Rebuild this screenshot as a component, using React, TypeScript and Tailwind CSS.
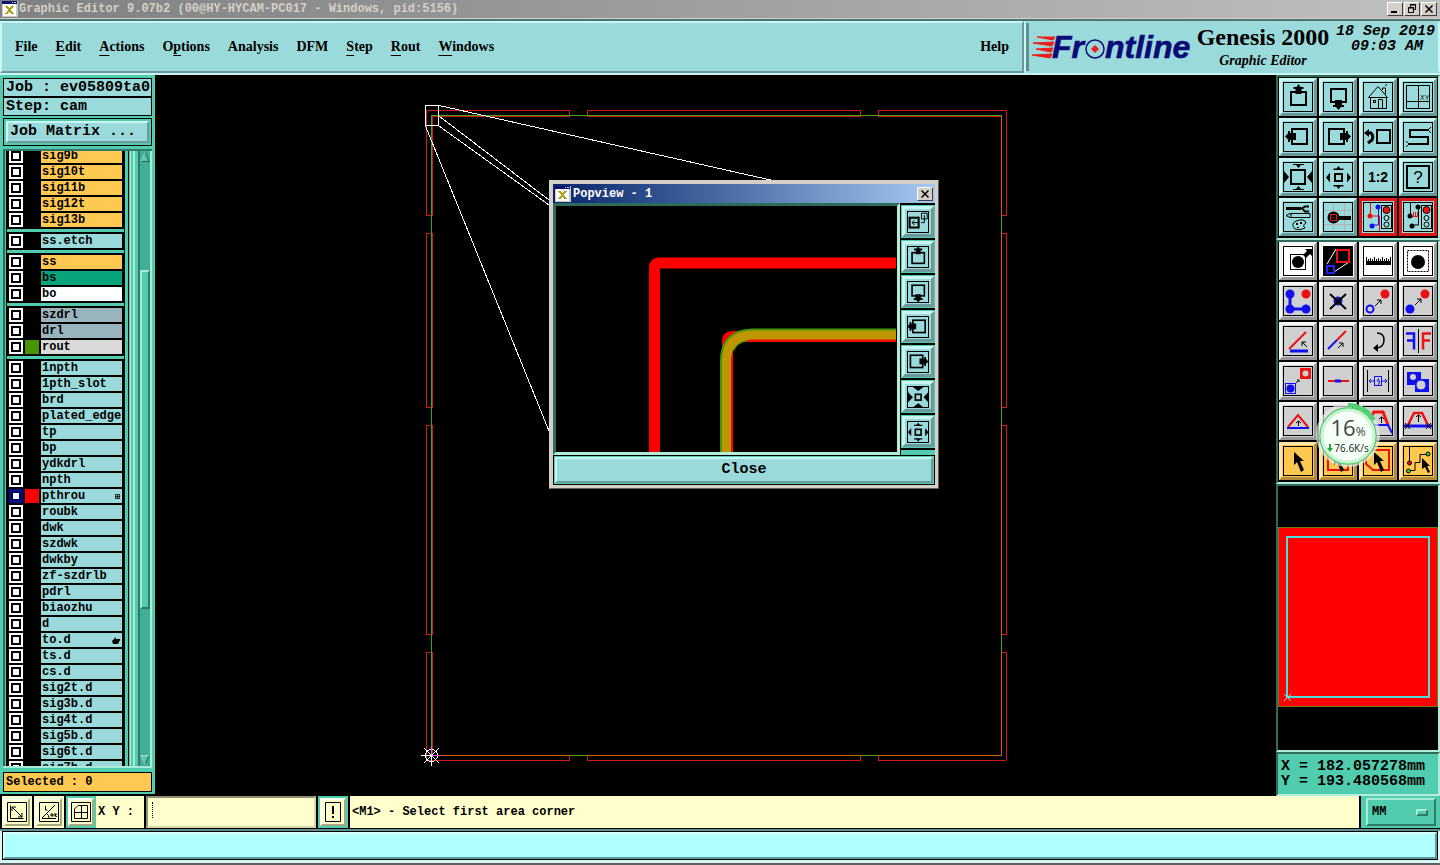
import { useState } from 'react'
import type { ReactNode } from 'react'

const mono = "font-['Liberation_Mono',monospace] font-bold"
const serif = "font-['Liberation_Serif',serif] font-bold"

// raised borders
const raisedCyan = 'border-t-[#c9f5f2] border-l-[#c9f5f2] border-r-[#6a9a9c] border-b-[#6a9a9c]'
const raisedGray = 'border-t-[#f4f4f4] border-l-[#f4f4f4] border-r-[#989898] border-b-[#989898]'
const raisedOrange = 'border-t-[#ffe6a8] border-l-[#ffe6a8] border-r-[#b48a40] border-b-[#b48a40]'
const raisedYellow = 'border-t-[#fffff0] border-l-[#fffff0] border-r-[#a8a880] border-b-[#a8a880]'
const raisedGreen = 'border-t-[#a8ecd8] border-l-[#a8ecd8] border-r-[#2f7a68] border-b-[#2f7a68]'
const raisedWin = 'border-t-white border-l-white border-r-[#404040] border-b-[#404040]'

const tones = {
  cyan: `bg-[#9bdada] ${raisedCyan}`,
  white: `bg-white ${raisedGray}`,
  gray: `bg-[#d0d0d0] ${raisedGray}`,
  orange: `bg-[#ffc850] ${raisedOrange}`,
  red: 'bg-[#9bdada] border-[#dc1818]',
}

type Tone = keyof typeof tones
type Tool = { label: string; tone: Tone; icon: ReactNode }
type Layer = { name: string; bg?: string; swatch?: string; active?: boolean; mark?: 'grid' | 'hand' }

const orange = 'bg-[#ffc850]'
const steel = 'bg-[#9ab4bd]'

const layerGroups: Layer[][] = [
  ['sig9b', 'sig10t', 'sig11b', 'sig12t', 'sig13b'].map((name) => ({ name, bg: orange })),
  [{ name: 'ss.etch' }],
  [{ name: 'ss', bg: orange }, { name: 'bs', bg: 'bg-[#08a47c]' }, { name: 'bo', bg: 'bg-white' }],
  [
    { name: 'szdrl', bg: steel },
    { name: 'drl', bg: steel },
    { name: 'rout', bg: 'bg-[#dadada]', swatch: 'bg-[#459600]' },
  ],
  [
    { name: '1npth' }, { name: '1pth_slot' }, { name: 'brd' }, { name: 'plated_edge' },
    { name: 'tp' }, { name: 'bp' }, { name: 'ydkdrl' }, { name: 'npth' },
    { name: 'pthrou', swatch: 'bg-[#ff0000]', active: true, mark: 'grid' },
    { name: 'roubk' }, { name: 'dwk' }, { name: 'szdwk' }, { name: 'dwkby' },
    { name: 'zf-szdrlb' }, { name: 'pdrl' }, { name: 'biaozhu' }, { name: 'd' },
    { name: 'to.d', mark: 'hand' }, { name: 'ts.d' }, { name: 'cs.d' },
    { name: 'sig2t.d' }, { name: 'sig3b.d' }, { name: 'sig4t.d' }, { name: 'sig5b.d' },
    { name: 'sig6t.d' }, { name: 'sig7b.d' },
  ],
]

const BLUE = '#1010f0'
const RED = '#ee1111'

const upIcon = (
  <>
    <rect x="8" y="10" width="15" height="13" fill="none" stroke="#000" strokeWidth="2" />
    <path d="M15.500 2l2 3h3v2h-2v5h-6V7h-2V5h3z" />
  </>
)
const downIcon = (
  <>
    <rect x="8" y="7" width="15" height="13" fill="none" stroke="#000" strokeWidth="2" />
    <path d="M12 18h7v5h2v2h-3l-2.500 3-2.500-3h-3v-2h2z" />
  </>
)
const leftIcon = (
  <>
    <rect x="9" y="7" width="15" height="15" fill="none" stroke="#000" strokeWidth="2" />
    <path d="M2 14.500l3-3V9h2v2h6v7H7v2H5v-2.500z" />
  </>
)
const rightIcon = (
  <>
    <rect x="6" y="7" width="15" height="15" fill="none" stroke="#000" strokeWidth="2" />
    <path d="M28 14.500l-3-3V9h-2v2h-6v7h6v2h2v-2.500z" />
  </>
)
const inwardArrows = <path d="M10 2h11v1h-3l-2.500 3L13 3h-3zM10 28h11v-1h-3l-2.500-3L13 27h-3zM1 9l5 6-5 6zM29 9l-5 6 5 6z" />
const zoomInIcon = (
  <>
    <rect x="8" y="8" width="14" height="14" fill="none" stroke="#000" strokeWidth="2" />
    {inwardArrows}
  </>
)
const zoomOutIcon = (
  <>
    <rect x="12" y="12" width="7" height="7" fill="none" stroke="#000" strokeWidth="2" />
    <path d="M15.500 4l2 2.500h3V8h-10V6.500h3zM15.500 27l2-2.500h3V23h-10v1.500h3zM3 15.500l4-5v10zM28 15.500l-4-5v10z" />
  </>
)
const light = (
  <>
    <rect x="18.500" y="3.500" width="10" height="23" fill="#9bdada" stroke="#000" />
    <circle cx="23.500" cy="8" r="3.500" fill={RED} stroke="#000" />
    <circle cx="23.500" cy="16" r="2.500" fill="none" stroke="#000" />
    <circle cx="23.500" cy="22.500" r="2.500" fill="none" stroke="#000" />
  </>
)
const arrow = <path d="M11 6v13l3-3 4 10 3-2-4-9h4z" />

const viewTools: Tool[] = [
  { label: 'Pan up', tone: 'cyan', icon: upIcon },
  { label: 'Pan down', tone: 'cyan', icon: downIcon },
  {
    label: 'Home view',
    tone: 'cyan',
    icon: (
      <g fill="none" stroke="#000">
        <path d="M5.500 15.500L15 4.500l9.500 11zM7.500 15.500v11h16v-11M15.500 26.500v-9h4v9M19.500 8V6h3v6M22 4l2-2" />
        <rect x="10.500" y="18.500" width="2" height="2" />
      </g>
    ),
  },
  {
    label: 'XY window',
    tone: 'cyan',
    icon: (
      <>
        <path d="M3.500 3.500h23v23h-23zM15.500 4v22M4 19.500h22" fill="none" stroke="#000" />
        <text x="17" y="18" fontSize="7" fontFamily="Liberation Sans" fontWeight="normal">XY</text>
      </>
    ),
  },
  { label: 'Pan left', tone: 'cyan', icon: leftIcon },
  { label: 'Pan right', tone: 'cyan', icon: rightIcon },
  {
    label: 'Previous view',
    tone: 'cyan',
    icon: (
      <>
        <rect x="14" y="8" width="13" height="13" fill="none" stroke="#000" strokeWidth="2" />
        <path d="M5 11h3q3 3 1 7l-4 3" fill="none" stroke="#000" strokeWidth="3" />
        <path d="M1 11l5-4v8z" />
      </>
    ),
  },
  {
    label: 'Snake view',
    tone: 'cyan',
    icon: (
      <>
        <path d="M25 8H7v7h18v7H6" fill="none" stroke="#000" strokeWidth="2" />
        <path d="M25 8l3-3M25 8l3 3M6 22l-3-3M6 22l-3 3" stroke="#000" />
      </>
    ),
  },
  { label: 'Zoom in', tone: 'cyan', icon: zoomInIcon },
  { label: 'Zoom out', tone: 'cyan', icon: zoomOutIcon },
  {
    label: 'Zoom ratio',
    tone: 'cyan',
    icon: <text x="15" y="20" fontSize="14" fontWeight="bold" textAnchor="middle" fontFamily="Liberation Sans">1:2</text>,
  },
  {
    label: 'Query',
    tone: 'cyan',
    icon: (
      <>
        <rect x="4" y="4" width="22" height="22" fill="none" stroke="#000" strokeWidth="2" />
        <text x="15" y="21" fontSize="17" fontWeight="normal" textAnchor="middle" fontFamily="Liberation Sans">?</text>
      </>
    ),
  },
  {
    label: 'Setup',
    tone: 'cyan',
    icon: (
      <>
        <path d="M3 5h15v3H3z" />
        <path d="M26 4.500h-4l-3 2 3 3h4" fill="none" stroke="#000" strokeWidth="2" />
        <path d="M3 13.500l4-2h20v4H7zM8 11.500v4M12 27q-5-5 1-8 9-3 10 2-4 2-1 5-5 3-10 1z" fill="none" stroke="#000" />
        <path d="M13 21h2v2h-2zM17 20h2v2h-2zM14 25h2v1h-2z" />
      </>
    ),
  },
  {
    label: 'Snap',
    tone: 'cyan',
    icon: (
      <>
        <path d="M10.500 1v28M21.500 1v28M1 8.500h28M1 22.500h28" stroke="#b8b0b0" />
        <circle cx="10.500" cy="15.500" r="6" />
        <path d="M15 14h13v4H15z" />
        <rect x="7.500" y="12.500" width="6" height="6" stroke={RED} />
        <path d="M10 15h1v1h-1z" fill={RED} />
      </>
    ),
  },
  {
    label: 'Net check',
    tone: 'red',
    icon: (
      <>
        <path d="M7.500 1v13h9v15" fill="none" stroke={RED} />
        <path d="M15.500 5v18H9" fill="none" stroke={BLUE} />
        <circle cx="7" cy="14" r="2.500" fill={RED} />
        <circle cx="15" cy="5" r="2.500" fill={BLUE} />
        <circle cx="9" cy="24" r="2.500" fill={BLUE} />
        {light}
      </>
    ),
  },
  {
    label: 'Spacing check',
    tone: 'red',
    icon: (
      <>
        <path d="M7.500 1v13M15.500 5v18H9M7.500 14.500h2" fill="none" stroke="#000" />
        <path d="M10.500 10v4M12.500 10v4M14.500 10v4M9 14.500h6" stroke={RED} />
        <circle cx="7" cy="14" r="2.500" />
        <circle cx="15" cy="5" r="2.500" />
        <circle cx="9" cy="24" r="2.500" />
        {light}
      </>
    ),
  },
]

const editTools: Tool[] = [
  {
    label: 'Select feature',
    tone: 'white',
    icon: (
      <>
        <rect x="7.500" y="8.500" width="15" height="15" fill="none" stroke="#000" />
        <circle cx="15" cy="16" r="6" />
        <path d="M20 9l4-4-2-2h7v7l-2-2-4 4z" />
      </>
    ),
  },
  {
    label: 'Popview',
    tone: 'white',
    icon: (
      <>
        <rect width="30" height="30" />
        <path d="M4 18l9-15M11 26l15-10" stroke="#fff" />
        <rect x="14" y="4" width="12" height="12" fill="none" stroke={RED} strokeWidth="2" />
        <rect x="4" y="20" width="7" height="7" fill="none" stroke="#2222ff" strokeWidth="2" />
      </>
    ),
  },
  {
    label: 'Measure',
    tone: 'white',
    icon: (
      <>
        <path d="M3 15h25v4H3z" />
        <path d="M3.500 11v4M5.500 13v2M7.500 12v3M9.500 13v2M11.500 11v4M13.500 13v2M15.500 12v3M17.500 13v2M19.500 11v4M21.500 13v2M23.500 12v3M25.500 13v2M27.500 11v4" stroke="#000" />
      </>
    ),
  },
  {
    label: 'Area select',
    tone: 'white',
    icon: (
      <>
        <rect x="4.500" y="4.500" width="21" height="21" fill="none" stroke="#000" strokeDasharray="2 1" />
        <circle cx="15" cy="16" r="7" />
      </>
    ),
  },
  {
    label: 'Net points',
    tone: 'gray',
    icon: (
      <>
        <path d="M7 8v15h16" fill="none" stroke={BLUE} strokeWidth="3" />
        <circle cx="7" cy="8" r="4.500" fill={BLUE} />
        <circle cx="7" cy="23" r="4.500" fill={BLUE} />
        <circle cx="23" cy="23" r="4.500" fill={BLUE} />
        <circle cx="23" cy="8" r="4.500" fill={RED} />
      </>
    ),
  },
  {
    label: 'Delete',
    tone: 'gray',
    icon: (
      <>
        <circle cx="15" cy="15" r="4.500" fill="#1818b0" />
        <path d="M7 8l16 15M23 8L7 23" stroke="#000" strokeWidth="2" />
      </>
    ),
  },
  {
    label: 'Move',
    tone: 'gray',
    icon: (
      <>
        <circle cx="7" cy="23" r="3.500" fill="none" stroke={BLUE} strokeWidth="2" />
        <circle cx="22" cy="8" r="4.500" fill={RED} />
        <path d="M12 20l6-6M14 14h4v4" fill="none" stroke="#000" />
      </>
    ),
  },
  {
    label: 'Copy',
    tone: 'gray',
    icon: (
      <>
        <circle cx="7" cy="23" r="4.500" fill={BLUE} />
        <circle cx="22" cy="8" r="4.500" fill={RED} />
        <path d="M12 19l6-6M14 13h4v4" fill="none" stroke="#000" />
      </>
    ),
  },
  {
    label: 'Angle',
    tone: 'gray',
    icon: (
      <>
        <path d="M7 25h18" stroke={BLUE} strokeWidth="3" />
        <path d="M6 23L23 6" stroke={RED} strokeWidth="2" />
        <path d="M24 21l-5-5M19 20v-4h4" fill="none" stroke="#000" />
      </>
    ),
  },
  {
    label: 'Extend line',
    tone: 'gray',
    icon: (
      <>
        <path d="M5 23l9-9" stroke={BLUE} strokeWidth="2" />
        <path d="M14 14l9-9" stroke={RED} strokeWidth="2" />
        <path d="M15 22l5-5M16 17h4v4" fill="none" stroke="#000" />
      </>
    ),
  },
  {
    label: 'Rotate',
    tone: 'gray',
    icon: (
      <>
        <path d="M14 7q7 0 7 7t-7 8" fill="none" stroke="#000" strokeWidth="1.500" />
        <path d="M15 18l-5 4 5 4z" />
      </>
    ),
  },
  {
    label: 'Mirror',
    tone: 'gray',
    icon: (
      <>
        <path d="M15.500 3v24" stroke="#000" />
        <path d="M3 7.500h8v16M4 14.500h7" fill="none" stroke={BLUE} strokeWidth="2.500" />
        <path d="M28 7.500h-8v16M27 14.500h-7" fill="none" stroke={RED} strokeWidth="2.500" />
      </>
    ),
  },
  {
    label: 'Copy to layer',
    tone: 'gray',
    icon: (
      <>
        <rect x="2.500" y="17.500" width="10" height="10" fill="none" stroke={BLUE} />
        <circle cx="7.500" cy="22.500" r="4" fill={BLUE} />
        <path d="M17 2h11v11H17z" fill={RED} />
        <circle cx="22.500" cy="7.500" r="3" fill="#d0d0d0" />
        <path d="M13 17l3-3M14 14h2v2" fill="none" stroke="#000" />
      </>
    ),
  },
  {
    label: 'Break line',
    tone: 'gray',
    icon: (
      <>
        <path d="M5 15h21" stroke={RED} strokeWidth="2" />
        <path d="M12 15h6" stroke={BLUE} strokeWidth="3" />
      </>
    ),
  },
  {
    label: 'Spacing',
    tone: 'gray',
    icon: (
      <>
        <path d="M4.500 4v22M25.500 4v22" stroke="#000" />
        <path d="M6 15h5M19 15h5M8 13l-2 2 2 2M22 13l2 2-2 2M16 12l-2 3h3l-2 4" fill="none" stroke={BLUE} />
        <rect x="11.500" y="10.500" width="7" height="9" fill="none" stroke={BLUE} />
      </>
    ),
  },
  {
    label: 'Merge shapes',
    tone: 'gray',
    icon: (
      <>
        <path d="M4 6h14v7h8v13H12v-7H4z" fill={BLUE} />
        <circle cx="10" cy="11" r="3" fill="#d0d0d0" />
        <circle cx="18" cy="19" r="5" fill="#d0d0d0" stroke={BLUE} />
      </>
    ),
  },
  {
    label: 'Triangle',
    tone: 'gray',
    icon: (
      <>
        <path d="M5 21L15 9l10 12" fill="none" stroke={RED} strokeWidth="2" />
        <path d="M4 22h22" stroke={BLUE} strokeWidth="2" />
        <path d="M15.500 20v-5M13 17l2.500-2 2.500 2" fill="none" stroke="#000" />
      </>
    ),
  },
  {
    label: 'Stretch corner',
    tone: 'gray',
    icon: (
      <>
        <path d="M4 22L14 5l3 4" fill="none" stroke={RED} strokeWidth="2" />
        <path d="M4 23L15 9l12 16" fill="none" stroke={BLUE} strokeWidth="2" />
      </>
    ),
  },
  {
    label: 'Trapezoid',
    tone: 'gray',
    icon: (
      <>
        <path d="M3 19L11 6h9l5 13" fill="none" stroke={RED} strokeWidth="3" />
        <path d="M3 19h22l4 8" fill="none" stroke={BLUE} strokeWidth="2" />
        <path d="M18.500 17v-6M16 13l2.500-2 2.500 2" fill="none" stroke="#000" />
      </>
    ),
  },
  {
    label: 'Trapezoid cut',
    tone: 'gray',
    icon: (
      <>
        <path d="M1 20h28" stroke={BLUE} strokeWidth="3" />
        <path d="M5 19l6-12h8l6 12" fill="none" stroke={RED} strokeWidth="2.500" />
        <path d="M15.500 16V9M13 11l2.500-2 2.500 2M2 17l5 6M7 17l-5 6M23 17l5 6M28 17l-5 6" fill="none" stroke="#000" />
      </>
    ),
  },
  { label: 'Pointer', tone: 'orange', icon: arrow },
  {
    label: 'Pointer rectangle',
    tone: 'orange',
    icon: (
      <>
        <rect x="5" y="6" width="20" height="18" fill="none" stroke={RED} strokeWidth="2" />
        {arrow}
      </>
    ),
  },
  {
    label: 'Pointer polygon',
    tone: 'orange',
    icon: (
      <>
        <path d="M8 4h18v20H10l-7-6V9z" fill="none" stroke={RED} strokeWidth="2" />
        {arrow}
      </>
    ),
  },
  {
    label: 'Pointer net',
    tone: 'orange',
    icon: (
      <>
        <path d="M6.500 1v16M6 24.500h6v-8h5v-8h9" fill="none" stroke="#000" />
        <circle cx="6.500" cy="17" r="2" fill={RED} stroke="#000" />
        <circle cx="5.500" cy="25" r="2" fill="#30e030" stroke="#000" />
        <circle cx="25" cy="8" r="2" fill="#30e030" stroke="#000" />
        <path d="M19 12v11l3-2 3 6 2-1-3-6h3z" />
      </>
    ),
  },
]

const popTools = [
  {
    label: 'Popview area',
    icon: (
      <>
        <rect x="5" y="10" width="11" height="12" fill="none" stroke="#000" strokeWidth="2.500" />
        <path d="M19.500 4.500h7v7h-7zM23 7v9h-4M16 16H8M11 13l-3 3 3 3" fill="none" stroke="#000" strokeWidth="1.200" />
      </>
    ),
  },
  { label: 'Popview up', icon: upIcon },
  { label: 'Popview down', icon: downIcon },
  { label: 'Popview left', icon: leftIcon },
  { label: 'Popview right', icon: rightIcon },
  {
    label: 'Popview zoom in',
    icon: (
      <>
        <rect x="12" y="12" width="7" height="7" fill="none" stroke="#000" strokeWidth="2" />
        <path d="M9 3h13l-6.500 5zM9 28h13l-6.500-5zM3 9l6 6.500L3 22zM28 9l-6 6.500 6 6.500z" />
      </>
    ),
  },
  { label: 'Popview zoom out', icon: zoomOutIcon },
]

const menus = [
  ['', 'F', 'ile'], ['', 'E', 'dit'], ['', 'A', 'ctions'], ['O', 'p', 'tions'], ['Analysis', '', ''],
  ['DFM', '', ''], ['', 'S', 'tep'], ['', 'R', 'out'], ['', 'W', 'indows'],
]

function ToolButton({ tool }: { tool: Tool }) {
  return (
    <button type="button" aria-label={tool.label} className={`h-[38px] w-[38px] border-[3px] p-px ${tones[tool.tone]}`}>
      <svg viewBox="0 0 30 30" className="h-[30px] w-[30px]">
        <rect x="0.500" y="0.500" width="29" height="29" fill="none" stroke="#000" />
        {tool.icon}
      </svg>
    </button>
  )
}

function AppIcon() {
  return (
    <svg viewBox="0 0 16 16" className="h-4 w-4 shrink-0" shapeRendering="crispEdges">
      <rect width="16" height="16" fill="#c8c8c8" />
      <rect x="1" y="3" width="13" height="12" fill="#fff" />
      <rect width="15" height="3" fill="#101070" />
      <path d="M10 1h1v1h-1zM12 1h2v1h-2z" fill="#ccc" />
      <path d="M4 5l7 8M11 5l-7 8" stroke="#b0a020" strokeWidth="2" />
    </svg>
  )
}

function WinButton({ label, children, onClick }: { label: string; children: ReactNode; onClick?: () => void }) {
  return (
    <button type="button" aria-label={label} onClick={onClick} className={`h-[14px] w-4 border bg-[#d4d0c8] ${raisedWin}`}>
      <svg viewBox="0 0 14 12" className="h-3 w-[14px]" fill="none" stroke="#000">
        {children}
      </svg>
    </button>
  )
}

function FrontlineLogo() {
  return (
    <svg viewBox="0 0 164 34" className="h-[34px] w-[164px] shrink-0" role="img" aria-label="Frontline">
      <path d="M6 7h18l-2 3zM2 13l21-1-2 4zM5 19l17-1-2 4zM1 25l20-1-2 4z" fill="#ee1c1c" stroke="#ee1c1c" />
      <g fill="#0a0a78" stroke="#0a0a78" strokeWidth="0.600" fontFamily="Liberation Sans" fontStyle="italic" fontWeight="bold" fontSize="32">
        <text x="21" y="28">Fr</text>
        <text x="74" y="28">ntline</text>
      </g>
      <circle cx="64" cy="19" r="9" fill="#9bdada" stroke="#0a0a78" strokeWidth="1.500" />
      <path d="M64 15l4 4-4 4-4-4z" fill="#ee1c1c" />
    </svg>
  )
}

function LayerRow({ layer }: { layer: Layer }) {
  const ring = layer.active
    ? 'border-[#0a0a90] shadow-[inset_0_0_0_2px_#000060]'
    : 'border-white shadow-[inset_0_0_0_2px_#000]'
  return (
    <label className="flex h-4 shrink-0 items-center gap-0.5 px-0.5">
      <input type="checkbox" className={`h-[14px] w-[14px] shrink-0 appearance-none border-2 bg-white ${ring}`} />
      <span className={`h-[14px] w-[14px] shrink-0 ${layer.swatch ?? 'bg-black'}`} />
      <span className={`flex h-[14px] flex-1 items-center justify-between overflow-hidden pl-px pr-0.5 text-xs leading-[14px] ${layer.bg ?? 'bg-[#9bdada]'}`}>
        {layer.name}
        {layer.mark === 'grid' && (
          <svg viewBox="0 0 5 5" className="h-[5px] w-[5px]" fill="none" stroke="#000" strokeWidth="0.800">
            <path d="M.5.5h4v4h-4zM2.500.5v4M.5 2.500h4" />
          </svg>
        )}
        {layer.mark === 'hand' && (
          <svg viewBox="0 0 8 7" className="h-[7px] w-2">
            <path d="M0 4l4-4v2h4v2H7v2L5 7H1z" />
          </svg>
        )}
      </span>
    </label>
  )
}

function Sidebar() {
  return (
    <aside className="flex w-[155px] shrink-0 flex-col border-b-2 border-black bg-[#52ccae] px-[3px] pb-0.5 pt-[3px]">
      <div className="border border-black bg-[#9bdada] pl-0.5 text-[15px] leading-[17px]">Job : ev05809ta0</div>
      <div className="border border-black bg-[#9bdada] pl-0.5 text-[15px] leading-[17px]">Step: cam</div>
      <div className="mt-0.5 border border-black p-0.5">
        <button type="button" className={`block w-full border-2 bg-[#9bdada] pl-0.5 text-left text-[15px] leading-[18px] ${raisedCyan}`}>
          Job Matrix ...
        </button>
      </div>
      <div className="mt-[3px] flex min-h-0 flex-1 border-b-2 border-t-2 border-b-[#a8ecd8] border-t-[#2f7a68]">
        <div className="w-0.5 bg-[#2f6b5c]" />
        <div className="ml-px flex w-[119px] flex-col overflow-hidden border-x border-black">
          <div className="-mt-1 flex flex-col gap-[3px]">
            {layerGroups.map((group) => (
              <div key={group[0].name} className="flex flex-col bg-black py-px">
                {group.map((layer) => <LayerRow key={layer.name} layer={layer} />)}
              </div>
            ))}
          </div>
        </div>
        <div className="ml-[3px] w-[3px] border-x border-[#a8ecd8] border-l-black" />
        <div className="ml-0.5 w-0.5 bg-[#a8ecd8]" />
        <div className="ml-[3px] flex flex-1 flex-col border-l-2 border-r-2 border-l-[#2f7a68] border-r-[#a8ecd8] bg-[#41ae96]">
          <svg viewBox="0 0 11 12" className="h-3 w-full">
            <path d="M1 11l4.500-10L10 11z" fill="#52ccae" stroke="#1f5c4e" />
            <path d="M1 11l4.500-10" stroke="#c0f4e6" />
          </svg>
          <div className="flex flex-[108]" />
          <div className={`flex-[339] border-2 bg-[#52ccae] ${raisedGreen}`} />
          <div className="flex flex-[147]" />
          <svg viewBox="0 0 11 12" className="h-3 w-full">
            <path d="M1 1l4.500 10L10 1z" fill="#52ccae" stroke="#1f5c4e" />
            <path d="M1 1l4.500 10M1 1h9" stroke="#c0f4e6" />
          </svg>
        </div>
      </div>
      <div className="mt-1 border border-black bg-[#ffc850] pl-0.5 text-xs leading-[18px]">Selected : 0</div>
    </aside>
  )
}

function Board() {
  const xs = [[426, 570], [587, 861], [878, 1006]]
  const ys = [[110, 216], [233, 408], [425, 635], [652, 760]]
  return (
    <svg viewBox="155 75 1121 721" preserveAspectRatio="xMinYMin meet" className="h-full w-full" fill="none" shapeRendering="crispEdges">
      <g stroke="#d01818">
        {xs.map(([a, b], i) => (
          <g key={a}>
            <path d={`M${a} 110.500H${b}M${i ? a : 432} 116.500H${i === 2 ? 1001 : b}M${a} 760.500H${b}`} />
            {i > 0 && <path d={`M${a + 0.5} 110v6M${a + 0.5} 755v6`} />}
            {i < 2 && <path d={`M${b - 0.5} 110v6M${b - 0.5} 755v6`} />}
          </g>
        ))}
        {ys.map(([a, b], i) => (
          <g key={a}>
            <path d={`M426.500 ${a}V${b}M432.500 ${i ? a : 116}V${i === 3 ? 755 : b}M1006.500 ${a}V${b}`} />
            {i > 0 && <path d={`M426 ${a + 0.5}h6M1001 ${a + 0.5}h6`} />}
            {i < 3 && <path d={`M426 ${b - 0.5}h6M1001 ${b - 0.5}h6`} />}
          </g>
        ))}
      </g>
      <path d="M431.500 115.500H1001.500V755.500H431.500z" stroke="#46a01e" />
      <g stroke="#d46400">
        {xs.map(([a, b], i) => <path key={a} d={`M${i ? a : 432} 755.500H${i === 2 ? 1001 : b}`} />)}
        {ys.map(([a, b], i) => <path key={a} d={`M1001.500 ${i ? a : 116}V${i === 3 ? 755 : b}`} />)}
      </g>
      <g stroke="#fff">
        <rect x="425.500" y="105.500" width="13" height="20" />
        <path d="M439 105.500L775 181M439 116L549 200M439 126L549 205M425.500 126L549 431" />
        <circle cx="431.500" cy="755.500" r="6" />
        <path d="M421 755.500h20M431.500 746v20M424 748l15 15M439 748l-15 15" />
      </g>
      <path d="M432 755.500h9M431.500 746v9" stroke="#e060e0" />
    </svg>
  )
}

function Popview({ onClose }: { onClose: () => void }) {
  return (
    <section className="absolute left-[394px] top-[105px] flex w-[390px] flex-col border border-b-[#606060] border-l-[#d4d0c8] border-r-[#606060] border-t-[#d4d0c8] bg-[#d4d0c8] p-[3px]">
      <header className="flex h-[19px] items-center gap-0.5 bg-gradient-to-r from-[#0a246a] to-[#a6caf0] px-0.5 text-xs text-white">
        <AppIcon />
        <h2 className="flex-1">Popview - 1</h2>
        <WinButton label="Close popview" onClick={onClose}>
          <path d="M3.500 2.500l7 7M10.500 2.500l-7 7" strokeWidth="1.500" />
        </WinButton>
      </header>
      <div className="flex bg-black">
        <div className="flex-1 border-[3px] border-b-[#b4ecdc] border-l-[#2f6b5c] border-r-[#b4ecdc] border-t-[#2f6b5c]">
          <svg viewBox="556 206 341 246" className="block w-full" fill="none">
            <path d="M654.500 453V268q0-5 5-5H896" stroke="#f00" strokeWidth="11" />
            <path d="M727.500 453V341.500q0-5 5-5H896" stroke="#f00" strokeWidth="11" />
            <path d="M725 453V361q0-27 27-27.500H896" stroke="#46960a" strokeWidth="10" />
            <path d="M734 352q2-9 14-11l-6-5-10 8z" fill="#46960a" />
            <path d="M726.500 453V361q0-25 25-26H896" stroke="#be9600" strokeWidth="9" />
          </svg>
        </div>
        <div className="flex w-[35px] flex-col gap-0.5 pl-px pt-0.5">
          {popTools.map((t) => (
            <div key={t.label} className="bg-[#52ccae] p-px">
              <button type="button" aria-label={t.label} className={`flex h-[31px] w-full items-center justify-center border-[3px] bg-[#9bdada] ${raisedCyan}`}>
                <svg viewBox="0 0 22 22" className="h-[22px] w-[22px]">
                  <rect x="0.500" y="0.500" width="21" height="21" fill="none" stroke="#000" />
                  <g transform="translate(-1.500 -1.500) scale(0.820)">{t.icon}</g>
                </svg>
              </button>
            </div>
          ))}
          <div className="flex-1 bg-[#52ccae]" />
        </div>
      </div>
      <div className="border border-black bg-[#52ccae] p-px">
        <button type="button" onClick={onClose} className={`block w-full border-2 bg-[#9bdada] text-[15px] leading-[22px] ${raisedCyan}`}>
          Close
        </button>
      </div>
    </section>
  )
}

function ToolPanel() {
  const frame = 'grid grid-cols-4 gap-0.5 border-2 border-b-[#b4ecdc] border-l-[#2f6b5c] border-r-[#b4ecdc] border-t-[#2f6b5c] bg-black px-px'
  return (
    <aside className="relative flex w-[164px] shrink-0 flex-col">
      <div className={`${frame} pb-0.5 pt-px`}>
        {viewTools.map((t) => <ToolButton key={t.label} tool={t} />)}
      </div>
      <div className={`${frame} pb-0.5`}>
        {editTools.map((t) => <ToolButton key={t.label} tool={t} />)}
      </div>
      <div className="min-h-0 flex-1 border-2 border-b-[#b4ecdc] border-l-[#2f6b5c] border-r-[#b4ecdc] border-t-[#2f6b5c] bg-black">
        <svg viewBox="1278 486 160 262" preserveAspectRatio="xMinYMin meet" className="h-full w-full" fill="none" shapeRendering="crispEdges">
          <rect x="1278.500" y="527.500" width="159" height="179" fill="#f00" stroke="#7a7a10" />
          <rect x="1287" y="537" width="142" height="160" stroke="#50dcdc" strokeWidth="2" />
          <path d="M1284 694l7 7M1291 694l-7 7" stroke="#a0e0e0" />
        </svg>
      </div>
      <div className="border-2 border-b-[#b4ecdc] border-l-[#2f6b5c] border-r-[#b4ecdc] border-t-[#2f6b5c] bg-[#52ccae] py-[5px] pl-[3px] text-[15px] leading-[15px]">
        <p>X = 182.057278mm</p>
        <p>Y = 193.480568mm</p>
      </div>
      <SpeedBall />
    </aside>
  )
}

// floating network monitor on top of the tool buttons
function SpeedBall() {
  return (
    <div className="absolute left-10 top-[328px] flex h-16 w-16 flex-col items-center justify-center font-['Open_Sans',sans-serif] font-normal text-[#444]">
      <svg viewBox="0 0 64 64" className="absolute inset-0" fill="none">
        <circle cx="32" cy="32" r="30" stroke="#e8e8e8" strokeOpacity="0.700" strokeWidth="4" />
        <path d="M32 2a30 30 0 0 1 26 15" stroke="#4cd070" strokeWidth="4" />
        <circle cx="32" cy="33" r="28" fill="#f6fff8" stroke="#50cc70" strokeWidth="1.500" />
        <circle cx="32" cy="33" r="26" stroke="#c8f4d2" strokeWidth="3" />
      </svg>
      <div className="relative text-[22px] leading-6">16<span className="text-xs">%</span></div>
      <div className="relative flex items-center text-[10px] leading-4 text-[#222]">
        <svg viewBox="0 0 6 8" className="mr-px h-2 w-1.5">
          <path d="M2 0h2v4h2L3 8 0 4h2z" fill="#20a848" />
        </svg>
        76.6K/s
      </div>
    </div>
  )
}

function StatusButton({ label, green, children }: { label: string; green?: boolean; children: ReactNode }) {
  return (
    <div className={`flex p-0.5 ${green ? 'bg-[#52ccae]' : 'bg-[#ffffcc]'}`}>
      <button type="button" aria-label={label} className={`border-2 bg-[#ffffcc] px-px ${raisedYellow}`}>
        <svg viewBox="0 0 20 20" className="h-5 w-5" fill="none" stroke="#000">
          {children}
        </svg>
      </button>
    </div>
  )
}

function StatusBar() {
  return (
    <div className="flex h-[33px] shrink-0 gap-0.5 border-b border-black bg-black pl-0.5 text-xs">
      <StatusButton label="Distance">
        <path d="M.5.5h19v19H.5zM3.500 3.500v13h13M5 5l10 10M5 9V5h4M15 11v4h-4" />
      </StatusButton>
      <StatusButton label="Angle mode">
        <path d="M.5.5h19v19H.5zM3 16.500h14M3 16L16 3M6.500 4v4h2M10 16q0-3-2-4M12 12h2v2h-2zM16 11v4M18 12l-2 1 2 2" />
      </StatusButton>
      <StatusButton label="Grid" green>
        <path d="M3.500 7L7 3.500h9.500v13h-13zM10.500 3.500v13M3.500 10.500h13M.5.5h19v19H.5z" />
      </StatusButton>
      <label htmlFor="xy" className="-ml-0.5 w-12 bg-[#ffffcc] pl-0.5 leading-8">X Y :</label>
      <div className="flex w-[170px] border-2 border-b-[#d8d8ac] border-l-[#908f70] border-r-[#d8d8ac] border-t-[#908f70] bg-[#ffffcc] py-1 pl-1">
        <span className="h-4 border-l border-dotted border-black" />
        <input id="xy" type="text" className="w-full bg-transparent pl-1 outline-none" />
      </div>
      <StatusButton label="Alert" green>
        <path d="M2.500.5h15v19h-15z" />
        <path d="M10 4v8M10 14v2" strokeWidth="2" />
      </StatusButton>
      <div className="flex-1 bg-[#ffffcc] pl-0.5 leading-8">&lt;M1&gt; - Select first area corner</div>
      <div className="w-[79px] bg-[#52ccae] py-0.5 pl-[5px] pr-1">
        <div className={`flex h-7 items-center border-2 pl-1 pr-1.5 ${raisedGreen}`}>
          <select aria-label="Units" className="min-w-0 flex-1 appearance-none bg-transparent outline-none">
            <option>MM</option>
            <option>INCH</option>
          </select>
          <span className={`h-[7px] w-3 border-2 ${raisedGreen}`} />
        </div>
      </div>
    </div>
  )
}

export default function App() {
  const [popview, setPopview] = useState(true)

  return (
    <div className={`flex h-screen flex-col overflow-hidden bg-black text-black ${mono}`}>
      <header className="flex h-[19px] shrink-0 items-center gap-px border-b border-[#d4d0c8] bg-gradient-to-r from-[#808080] to-[#c0c0c0] pl-0.5 pr-[3px] text-xs text-[#d4d0c8]">
        <AppIcon />
        <h1 className="flex-1 whitespace-nowrap">Graphic Editor 9.07b2 (00@HY-HYCAM-PC017 - Windows, pid:5156)</h1>
        <WinButton label="Minimize"><path d="M3 9h6" strokeWidth="2" /></WinButton>
        <WinButton label="Restore"><path d="M5.500 4V1.500h5v5H8M5 2h6M3.500 5v4.500h5V4.500h-5M3 5h6" /></WinButton>
        <WinButton label="Close"><path d="M3.500 2.500l7 7M10.500 2.500l-7 7" strokeWidth="1.500" /></WinButton>
      </header>

      <div className="flex h-14 shrink-0 border-b-2 border-t-2 border-b-[#c9f5f2] border-t-[#4f7474] bg-[#9bdada]">
        <nav className={`flex flex-1 items-center gap-[18px] border-2 px-[13px] pb-0.5 text-[14px] ${raisedCyan} ${serif}`}>
          {menus.map(([pre, key, post]) => (
            <button type="button" key={pre + key + post}>
              {pre}{key && <span className="underline underline-offset-4">{key}</span>}{post}
            </button>
          ))}
          <button type="button" className="ml-auto">Help</button>
        </nav>
        <div className="flex w-[416px] items-center border-2 border-b-[#9bdada] border-l-[#c9f5f2] border-r-[#c9f5f2] border-t-[#9bdada]">
          <div className="h-full w-[3px] bg-[#5f8f91]" />
          <div className="ml-0.5"><FrontlineLogo /></div>
          <div className={`w-[136px] shrink-0 text-center ${serif}`}>
            <div className="whitespace-nowrap text-2xl leading-7">Genesis 2000</div>
            <div className="text-[14px] leading-5 italic">Graphic Editor</div>
          </div>
          <div className="mb-4 flex-1 whitespace-nowrap pr-[3px] text-right text-[15px] leading-[15px] italic">
            <p>18 Sep 2019</p>
            <p className="pr-3">09:03 AM</p>
          </div>
        </div>
      </div>

      <main className="flex min-h-0 flex-1">
        <Sidebar />
        <div className="relative min-w-0 flex-1">
          <Board />
          {popview && <Popview onClose={() => setPopview(false)} />}
        </div>
        <ToolPanel />
      </main>

      <StatusBar />

      <footer className="flex h-9 shrink-0 flex-col border-b-2 border-t-2 border-b-[#606060] border-t-[#5f8f91] bg-[#d8f8f8] px-0.5 pb-[3px]">
        <div className="flex-1 border border-black">
          <div className="h-full border-2 border-b-[#5f9a9c] border-l-[#d8ffff] border-r-[#5f9a9c] border-t-[#d8ffff] bg-[#b0ffff]" />
        </div>
      </footer>
    </div>
  )
}
